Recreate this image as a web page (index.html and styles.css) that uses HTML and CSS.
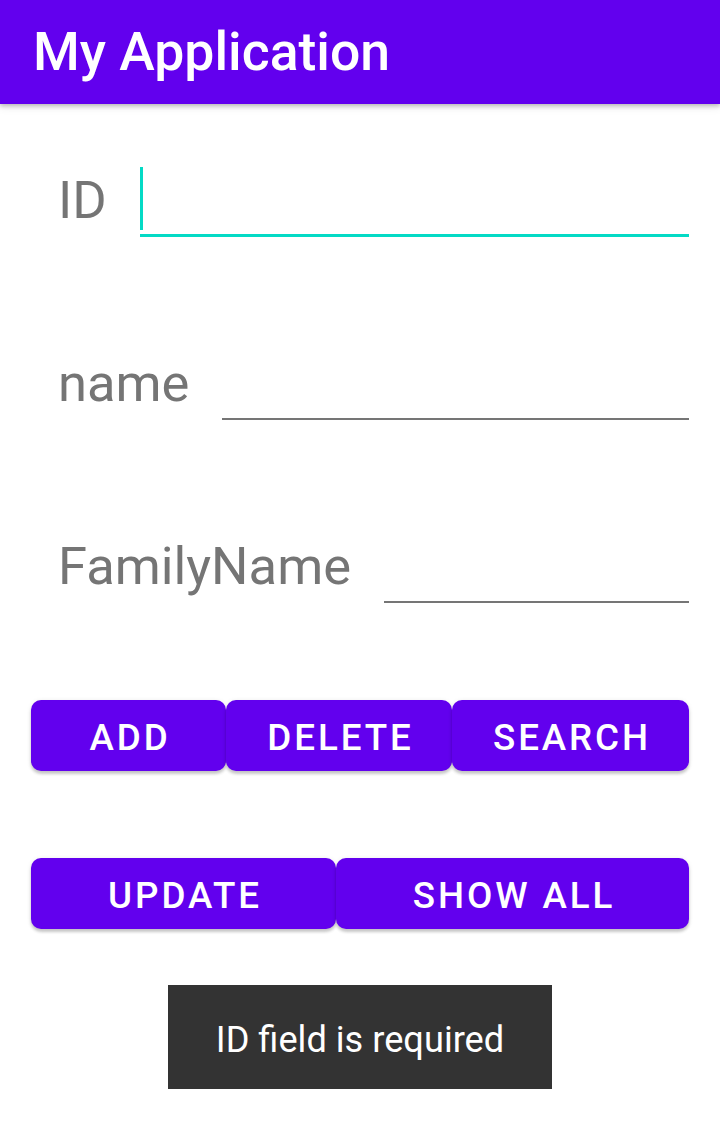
FILE: index.html
```html
<!DOCTYPE html>
<html lang="en">
<head>
<meta charset="utf-8">
<title>My Application</title>
<link rel="stylesheet" href="styles.css">
</head>
<body>
<header class="app-bar">
  <h1 class="app-title">My Application</h1>
</header>
<main class="content">
  <div class="field-row">
    <label class="field-label">ID</label>
    <div class="field field-focused"><span class="cursor"></span></div>
  </div>
  <div class="field-row">
    <label class="field-label">name</label>
    <div class="field"></div>
  </div>
  <div class="field-row">
    <label class="field-label">FamilyName</label>
    <div class="field"></div>
  </div>
  <div class="btn-row btn-row-three">
    <button class="btn">ADD</button>
    <button class="btn">DELETE</button>
    <button class="btn">SEARCH</button>
  </div>
  <div class="btn-row btn-row-two">
    <button class="btn">UPDATE</button>
    <button class="btn">SHOW ALL</button>
  </div>
</main>
<div class="toast">ID field is required</div>
</body>
</html>
```
FILE: styles.css
```css
html, body {
  margin: 0;
  padding: 0;
  background: #ffffff;
  font-family: Roboto, "Noto Sans", "Liberation Sans", sans-serif;
}

body {
  position: relative;
  width: 720px;
  height: 1137px;
  overflow: hidden;
}

.app-bar {
  height: 104px;
  background: #6200ee;
  display: flex;
  align-items: center;
  padding-left: 33px;
  box-shadow: 0 2px 4px rgba(0, 0, 0, 0.22), 0 4px 8px rgba(0, 0, 0, 0.08);
  position: relative;
  z-index: 1;
}

.app-title {
  margin: 0;
  color: #ffffff;
  font-size: 53.5px;
  font-weight: 500;
  line-height: 62px;
}

.content {
  padding: 57px 31px 0 58px;
}

.field-row {
  display: flex;
  align-items: flex-end;
  margin-bottom: 107px;
}

.field-label {
  font-size: 52.5px;
  line-height: 62px;
  color: #757575;
  margin-right: 33px;
  margin-bottom: 6px;
  white-space: nowrap;
}

.field {
  flex: 1;
  height: 74px;
  border-bottom: 2px solid #757575;
  display: flex;
  align-items: flex-start;
}

.field-focused {
  height: 73px;
  border-bottom: 3px solid #03dac5;
}

.cursor {
  width: 3px;
  height: 63px;
  margin-top: 6px;
  background: #03dac5;
}

.btn-row {
  display: grid;
  margin-left: -27px;
  height: 71px;
}

.btn-row-three {
  grid-template-columns: 195px 226px 237px;
  margin-top: -10px;
  margin-bottom: 87px;
}

.btn-row-two {
  grid-template-columns: 305px 353px;
}

.btn {
  border: none;
  margin: 0;
  padding: 4px 0 0 3px;
  background: #6200ee;
  color: #ffffff;
  font-family: Roboto, "Noto Sans", "Liberation Sans", sans-serif;
  font-size: 36.75px;
  font-weight: 500;
  letter-spacing: 2.9px;
  border-radius: 10px;
  box-shadow: 0 3px 3px rgba(0, 0, 0, 0.18), 0 1px 5px rgba(0, 0, 0, 0.1);
}

.toast {
  position: absolute;
  left: 168px;
  top: 985px;
  width: 384px;
  height: 104px;
  box-sizing: border-box;
  padding-top: 5px;
  background: #333333;
  color: #ffffff;
  font-size: 36.2px;
  display: flex;
  align-items: center;
  justify-content: center;
}
```
